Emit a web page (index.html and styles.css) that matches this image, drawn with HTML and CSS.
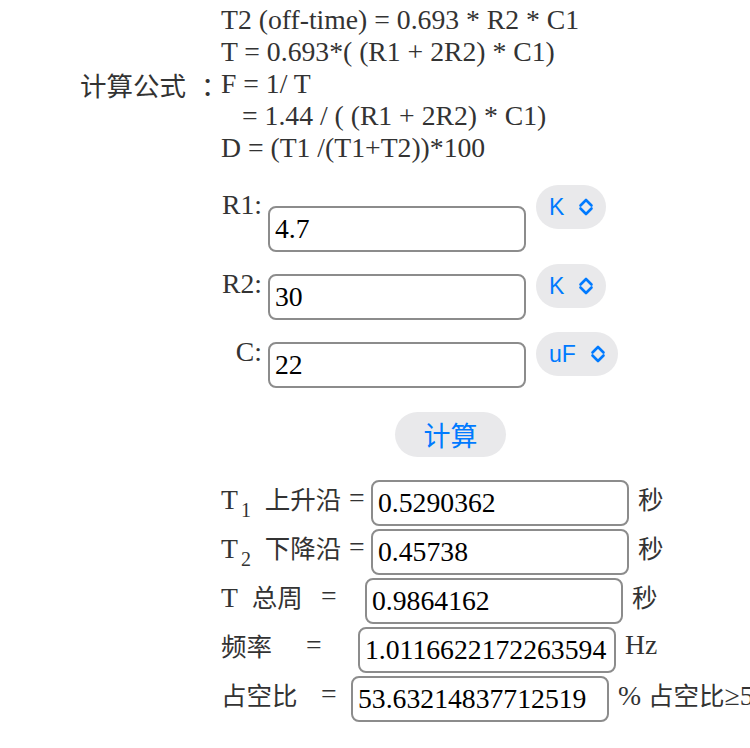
FILE: index.html
```html
<!DOCTYPE html>
<html lang="zh-CN">
<head>
  <meta charset="UTF-8">
  <meta name="viewport" content="width=device-width, initial-scale=1.0">
  <title>555 多谐振荡器计算</title>
  <link rel="stylesheet" href="styles.css">
</head>
<body>
  <div class="page">
    <div class="formula">
      <div class="formula-label">计算公式<span class="colon">：</span></div>
      <div class="formula-lines">
        <div>T2 (off-time) = 0.693 * R2 * C1</div>
        <div>T = 0.693*( (R1 + 2R2) * C1)</div>
        <div>F = 1/ T</div>
        <div class="indent">= 1.44 / ( (R1 + 2R2) * C1)</div>
        <div>D = (T1 /(T1+T2))*100</div>
      </div>
    </div>

    <div class="params">
      <div class="param-row param-row-first">
        <label class="param-label" for="r1">R1:</label>
        <input class="param-input" id="r1" type="text" value="4.7">
        <span class="unit-select">K
          <svg class="chevrons" viewBox="0 0 16 18" width="16" height="18"><path d="M2.5 7.5 L8 2 L13.5 7.5 M2.5 10.5 L8 16 L13.5 10.5"/></svg>
        </span>
      </div>
      <div class="param-row">
        <label class="param-label" for="r2">R2:</label>
        <input class="param-input" id="r2" type="text" value="30">
        <span class="unit-select">K
          <svg class="chevrons" viewBox="0 0 16 18" width="16" height="18"><path d="M2.5 7.5 L8 2 L13.5 7.5 M2.5 10.5 L8 16 L13.5 10.5"/></svg>
        </span>
      </div>
      <div class="param-row">
        <label class="param-label" for="c1">C:</label>
        <input class="param-input" id="c1" type="text" value="22">
        <span class="unit-select">uF
          <svg class="chevrons" viewBox="0 0 16 18" width="16" height="18"><path d="M2.5 7.5 L8 2 L13.5 7.5 M2.5 10.5 L8 16 L13.5 10.5"/></svg>
        </span>
      </div>
    </div>

    <div class="action">
      <button class="calc-button" type="button">计算</button>
    </div>

    <div class="results">
      <div class="result-row row-rise">
        <span class="result-name">T<sub>1</sub> <span class="cjk">上升沿</span></span>
        <span class="result-eq">=</span>
        <input class="result-input" type="text" value="0.5290362" readonly>
        <span class="result-unit cjk">秒</span>
      </div>
      <div class="result-row row-rise">
        <span class="result-name">T<sub>2</sub> <span class="cjk">下降沿</span></span>
        <span class="result-eq">=</span>
        <input class="result-input" type="text" value="0.45738" readonly>
        <span class="result-unit cjk">秒</span>
      </div>
      <div class="result-row row-period">
        <span class="result-name">T&nbsp;&nbsp;<span class="cjk">总周</span></span>
        <span class="result-eq">=</span>
        <input class="result-input" type="text" value="0.9864162" readonly>
        <span class="result-unit cjk">秒</span>
      </div>
      <div class="result-row row-freq">
        <span class="result-name cjk">频率</span>
        <span class="result-eq">=</span>
        <input class="result-input" type="text" value="1.0116622172263594" readonly>
        <span class="result-unit">Hz</span>
      </div>
      <div class="result-row row-duty">
        <span class="result-name cjk">占空比</span>
        <span class="result-eq">=</span>
        <input class="result-input" type="text" value="53.63214837712519" readonly>
        <span class="result-unit">% <span class="cjk">占空比</span>≥50%</span>
      </div>
    </div>
  </div>
</body>
</html>
```

FILE: styles.css
```css
:root {
  --text-color: #333333;
  --input-border: #8c8c8c;
  --pill-background: #e9e9eb;
  --link-blue: #007aff;
}

* {
  margin: 0;
  padding: 0;
  box-sizing: border-box;
}

body {
  background-color: #ffffff;
  color: var(--text-color);
  font-family: 'Liberation Serif', 'Noto Sans CJK SC', serif;
  font-size: 27.7px;
  overflow: hidden;
}

.page {
  width: 750px;
  height: 748px;
  overflow: hidden;
  padding-top: 4px;
}

.cjk {
  font-family: 'Noto Sans CJK SC', sans-serif;
  font-size: 25.5px;
}

/* formula block */
.formula {
  display: flex;
  align-items: center;
  padding-left: 80px;
}

.formula-label {
  width: 141px;
  flex-shrink: 0;
  white-space: nowrap;
  font-family: 'Noto Sans CJK SC', sans-serif;
  font-size: 26.5px;
}

/* the SC colon sits at the left of its box, push it toward the formulas */
.formula-label .colon {
  margin-left: 15px;
  letter-spacing: -18px;
}

.formula-lines div {
  white-space: nowrap;
}

.formula-lines .indent {
  padding-left: 21px;
}

/* parameter inputs */
.params {
  margin-top: 21px;
  padding-left: 220px;
}

.param-row {
  display: flex;
  align-items: flex-start;
  margin-bottom: 12px;
}

.param-row:last-child {
  margin-bottom: 0;
}

.param-label {
  width: 42px;
  margin-top: 4px;
  text-align: right;
}

.param-input {
  width: 258px;
  height: 46px;
  margin-top: 10px;
  margin-left: 6px;
  padding: 0 5px;
  border: 2px solid var(--input-border);
  border-radius: 8px;
  background: #ffffff;
  color: #000000;
  font-family: 'Liberation Serif', serif;
  font-size: 27.7px;
  outline: none;
}

.param-row-first .param-input {
  margin-top: 21px;
}

.unit-select {
  display: flex;
  align-items: center;
  gap: 14px;
  height: 44px;
  margin-left: 10px;
  padding: 0 12px 0 13px;
  border-radius: 22px;
  background-color: var(--pill-background);
  color: var(--link-blue);
  font-family: 'Liberation Sans', 'Noto Sans', sans-serif;
  font-size: 23px;
}

.chevrons {
  fill: none;
  stroke: var(--link-blue);
  stroke-width: 2.6;
  stroke-linecap: round;
  stroke-linejoin: round;
}

/* calculate button */
.action {
  margin-top: 24px;
  padding-left: 395px;
}

.calc-button {
  width: 111px;
  height: 45px;
  border: none;
  border-radius: 23px;
  background-color: var(--pill-background);
  color: var(--link-blue);
  font-family: 'Noto Sans CJK SC', sans-serif;
  font-size: 27px;
  cursor: pointer;
}

/* results */
.results {
  margin-top: 23px;
  padding-left: 221px;
  display: flex;
  flex-direction: column;
  gap: 3px;
}

.result-row {
  display: flex;
  align-items: flex-start;
  white-space: nowrap;
  line-height: 32px;
}

.result-row > * {
  flex-shrink: 0;
}

.result-name,
.result-eq,
.result-unit {
  margin-top: 2px;
}

.result-name sub {
  font-size: 20px;
  line-height: 0;
  vertical-align: -8px;
  margin-left: 3px;
  margin-right: 7px;
}

.result-eq {
  width: 16px;
}

.row-rise .result-name { width: 128px; }
.row-rise .result-eq { margin-right: 6px; }

.row-period .result-name { width: 100px; }
.row-period .result-eq { margin-right: 28px; }

.row-freq .result-name { width: 85px; }
.row-freq .result-eq { margin-right: 36px; }

.row-duty .result-name { width: 100px; }
.row-duty .result-eq { margin-right: 14px; }

.result-input {
  width: 258px;
  height: 46px;
  padding: 0 5px;
  border: 2px solid var(--input-border);
  border-radius: 8px;
  background: #ffffff;
  color: #000000;
  font-family: 'Liberation Serif', serif;
  font-size: 27.7px;
  outline: none;
}

.result-unit {
  margin-left: 9px;
}
```
